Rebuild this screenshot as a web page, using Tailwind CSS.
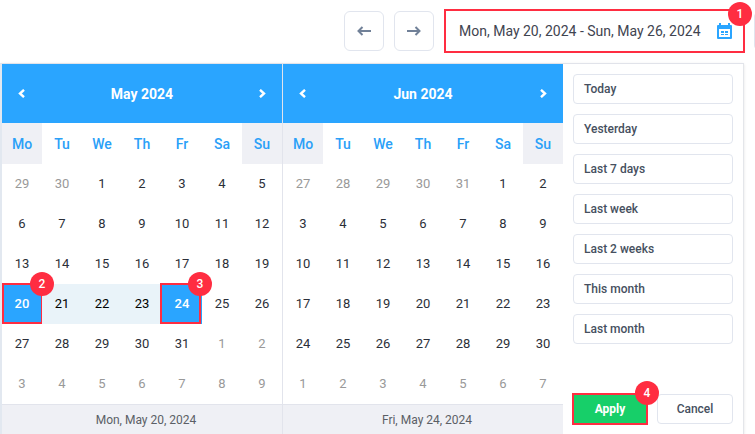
<!DOCTYPE html>
<html lang="en">
<head>
    <meta charset="UTF-8">
    <meta name="viewport" content="width=device-width, initial-scale=1.0">
    <title>Date range</title>
    <script src="https://cdn.jsdelivr.net/npm/@tailwindcss/browser@4"></script>
</head>
<body class="bg-white font-['Roboto',sans-serif] text-[#465060] overflow-hidden">
    <!-- Toolbar -->
    <header class="-mr-[10px] flex items-center justify-end gap-[10px] pt-[9px] pb-[10px]">
        <button aria-label="Previous period" class="flex size-10 shrink-0 items-center justify-center rounded-md border border-[#e1e5ee]">
            <svg class="h-[10px] w-[14px]" viewBox="0 0 14 10" fill="none" stroke="#718198" stroke-width="2"><path d="M14 5H1.5M5.5 1L1.5 5l4 4"/></svg>
        </button>
        <button aria-label="Next period" class="flex size-10 shrink-0 items-center justify-center rounded-md border border-[#e1e5ee]">
            <svg class="h-[10px] w-[14px]" viewBox="0 0 14 10" fill="none" stroke="#718198" stroke-width="2"><path d="M0 5h12.5M8.5 1l4 4-4 4"/></svg>
        </button>
        <div class="relative flex h-11 w-[301px] shrink-0 items-center border-2 border-[#ff2d41] pr-[11px] pl-[13px]">
            <input id="range" type="text" readonly aria-label="Date range" value="Mon, May 20, 2024 - Sun, May 26, 2024" class="min-w-0 flex-1 text-sm text-[#3f4450] outline-none">
            <label for="range" aria-label="Open calendar">
                <svg class="h-4 w-[15px]" viewBox="0 0 15 16" fill="#2aa5ff">
                    <path fill-rule="evenodd" d="M2 0h2v2h7V0h2v2h1q1 0 1 1v12q0 1-1 1H1q-1 0-1-1V3q0-1 1-1h1zM2 6v8h11V6z"/>
                    <path d="M4 8h3v2H4zM8 8h3v2H8zM4 11h3v1H4zM8 11h3v1H8z"/>
                </svg>
            </label>
            <span class="absolute -top-[9px] -right-[9px] flex size-6 items-center justify-center rounded-full bg-[#ff2d41] text-xs font-medium text-white">1</span>
        </div>
        <button aria-label="More" class="-ml-px h-10 w-[11px] shrink-0 rounded-l-md border border-r-0 border-[#e1e5ee]"></button>
    </header>

    <!-- Picker -->
    <main class="mr-[11px] flex border-t border-r border-l-2 border-t-[#e1e3ea] border-r-[#e4e6ea] border-l-[#e2e8f0] shadow-sm">
        <div id="months" class="flex min-w-0 flex-1"></div>
        <aside class="flex w-[180px] flex-col justify-between p-[10px]">
            <div id="presets" class="flex flex-col gap-[10px]"></div>
            <div class="flex gap-[10px]">
                <div class="relative flex-1">
                    <button class="block h-[30px] w-full bg-[#17cf69] text-xs font-bold text-white outline-2 -outline-offset-1 outline-[#ff2d41]">Apply</button>
                    <span class="absolute -top-[13px] -right-[12px] flex size-6 items-center justify-center rounded-full bg-[#ff2d41] text-xs font-medium text-white">4</span>
                </div>
                <button class="h-[30px] flex-1 rounded border border-[#e1e5ee] text-xs font-medium">Cancel</button>
            </div>
        </aside>
    </main>

    <script>
        // lead: days of the previous month shown before the 1st
        const months = [
            { title: 'May 2024', lead: 2, prev: 30, days: 31, footer: 'Mon, May 20, 2024', from: 20, to: 24 },
            { title: 'Jun 2024', lead: 5, prev: 31, days: 30, footer: 'Fri, May 24, 2024' }
        ];
        const weekdays = ['Mo', 'Tu', 'We', 'Th', 'Fr', 'Sa', 'Su'];
        const presets = ['Today', 'Yesterday', 'Last 7 days', 'Last week', 'Last 2 weeks', 'This month', 'Last month'];

        function dayCell(m, n) {
            let label = n;
            let cls = 'text-[#2b2f38]';
            let mark = '';
            if (n < 1) { label = m.prev + n; cls = 'text-[#999]'; }
            else if (n > m.days) { label = n - m.days; cls = 'text-[#999]'; }
            else if (n === m.from || n === m.to) {
                const start = n === m.from;
                cls = 'bg-[#2aa5ff] text-white font-medium';
                mark = `<span class="pointer-events-none absolute -top-px bottom-0 border-2 border-[#ff2d41] ${start ? 'left-0 -right-px' : '-left-[2px] right-px'}"></span>
                    <span class="absolute -top-3 z-10 flex size-6 items-center justify-center rounded-full bg-[#ff2d41] text-xs font-medium text-white ${start ? '-right-3' : '-right-[10px]'}">${start ? 2 : 3}</span>`;
            } else if (n > m.from && n < m.to) cls = 'bg-[#e9f3f9] text-black';
            return `<td class="relative h-10 p-0"><button class="block h-10 w-full ${cls}">${label}</button>${mark}</td>`;
        }

        document.getElementById('months').innerHTML = months.map((m, i) => {
            let rows = '';
            for (let r = 0; r < 6; r++) {
                rows += '<tr>';
                for (let c = 0; c < 7; c++) rows += dayCell(m, r * 7 + c + 1 - m.lead);
                rows += '</tr>';
            }
            const head = weekdays.map((d, c) =>
                `<th class="h-[41px] p-0 font-medium ${c === 0 || c === 6 ? 'bg-[#eff0f5]' : ''}">${d}</th>`).join('');
            return `<section class="min-w-0 flex-1 ${i ? 'border-l border-[#e2e4ec]' : ''}">
                <div class="flex h-[59px] items-center justify-between bg-[#2aa5ff] px-4 text-white">
                    <button aria-label="Previous month"><svg class="h-[9px] w-[7px]" viewBox="0 0 7 9" fill="none" stroke="currentColor" stroke-width="2.4"><path d="M6 .8L2 4.5l4 3.7"/></svg></button>
                    <h2 class="text-sm font-bold">${m.title}</h2>
                    <button aria-label="Next month"><svg class="h-[9px] w-[7px]" viewBox="0 0 7 9" fill="none" stroke="currentColor" stroke-width="2.4"><path d="M1 .8l4 3.7-4 3.7"/></svg></button>
                </div>
                <table class="w-full table-fixed border-collapse text-center text-[13px]">
                    <thead class="text-sm text-[#2aa0f8]"><tr>${head}</tr></thead>
                    <tbody>${rows}</tbody>
                </table>
                <div class="flex h-[30px] items-center justify-center border-t border-[#e2e4ec] bg-[#eff0f5] pl-2 text-xs text-[#5b5f66]">${m.footer}</div>
            </section>`;
        }).join('');

        document.getElementById('presets').innerHTML = presets.map(p =>
            `<button class="h-[30px] rounded border border-[#e1e5ee] px-[10px] text-left text-xs font-medium">${p}</button>`).join('');
    </script>
</body>
</html>
